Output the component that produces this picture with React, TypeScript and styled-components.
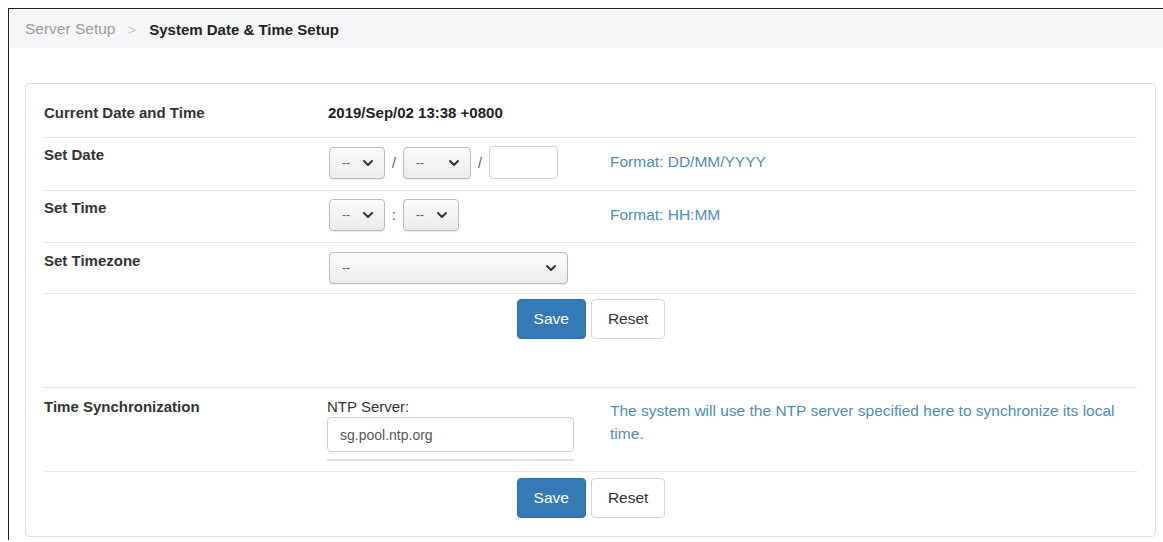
import React from "react";
import styled, { createGlobalStyle } from "styled-components";
import { ChevronDown } from "lucide-react";

const GlobalStyle = createGlobalStyle`
  html, body {
    margin: 0;
    padding: 0;
    background: #fff;
  }
  body {
    font-family: "Liberation Sans", Arial, sans-serif;
    font-size: 15px;
    color: #333;
  }
`;

const Frame = styled.div`
  margin: 8px 0 0 8px;
  padding: 1px 0 0 1px;
  border-top: 1px solid #222;
  border-left: 1px solid #222;
  min-height: 532px;
  box-sizing: border-box;
`;

const Crumbs = styled.div`
  height: 38px;
  background: #f4f6f8;
  display: flex;
  align-items: center;
  padding-left: 15px;
  gap: 12px;
  font-size: 15px;
`;

const CrumbLink = styled.span`
  color: #9a9a9a;
  font-size: 15.5px;
`;

const CrumbSep = styled.span`
  color: #c8c8c8;
`;

const CrumbCurrent = styled.span`
  color: #222;
  font-weight: bold;
  margin-left: 1px;
`;

const Panel = styled.div`
  margin: 35px 7px 0 15px;
  padding: 0 18px;
  border: 1px solid #dedede;
  border-radius: 4px;
`;

const Row = styled.div<{ $pt: number; $pb: number; $top?: boolean }>`
  display: grid;
  grid-template-columns: 284px 282px 1fr;
  align-items: start;
  padding: ${(p) => p.$pt}px 0 ${(p) => p.$pb}px;
  border-bottom: 1px solid #e4e4e4;
  border-top: ${(p) => (p.$top ? "1px solid #e4e4e4" : "none")};
`;

const Label = styled.div`
  font-weight: bold;
  line-height: 18px;
  color: #333;
`;

const Value = styled.div`
  font-weight: bold;
  line-height: 18px;
  color: #222;
`;

const Controls = styled.div`
  display: flex;
  align-items: center;
  gap: 6px;
  margin-left: 1px;
`;

const Help = styled.div<{ $top?: number }>`
  color: #4f8cb6;
  font-size: 15.5px;
  line-height: 23px;
  padding-top: ${(p) => p.$top ?? 0}px;
  max-width: 515px;
`;

const Divider = styled.span`
  color: #555;
  font-size: 14px;
  width: 6px;
  text-align: center;
`;

const SelectBox = styled.div<{ $w: number }>`
  width: ${(p) => p.$w}px;
  height: 32px;
  box-sizing: border-box;
  border: 1px solid #b9b9b9;
  border-radius: 4px;
  background: linear-gradient(#fbfbfb, #ececec);
  box-shadow: 0 1px 1px rgba(0, 0, 0, 0.08);
  display: flex;
  align-items: center;
  justify-content: space-between;
  padding: 0 8px 0 12px;
  font-size: 12px;
  color: #555;
`;

const TextBox = styled.div<{ $w: number; $h: number }>`
  width: ${(p) => p.$w}px;
  height: ${(p) => p.$h}px;
  box-sizing: border-box;
  border: 1px solid #cfcfcf;
  border-radius: 4px;
  background: #fff;
  display: flex;
  align-items: center;
  padding: 0 12px;
  font-size: 14px;
  color: #555;
`;

const NtpField = styled.div`
  display: flex;
  flex-direction: column;
  margin-left: -1px;
  width: 247px;
`;

const FieldCaption = styled.div`
  line-height: 18px;
  color: #333;
  margin-bottom: 1px;
`;

const Underline = styled.div`
  height: 2px;
  background: #e2e2e2;
  margin-top: 7px;
`;

const Actions = styled.div<{ $pt: number; $pb: number }>`
  display: flex;
  justify-content: center;
  gap: 5px;
  padding: ${(p) => p.$pt}px 0 ${(p) => p.$pb}px;
  margin-left: 1px;
`;

const Button = styled.button<{ $primary?: boolean }>`
  height: 40px;
  padding: 0 16px;
  border-radius: 4px;
  font-family: inherit;
  font-size: 15.5px;
  cursor: pointer;
  border: 1px solid ${(p) => (p.$primary ? "#2e6da4" : "#d4d4d4")};
  background: ${(p) => (p.$primary ? "#337ab7" : "#fff")};
  color: ${(p) => (p.$primary ? "#fff" : "#333")};
`;

function Select({ width }: { width: number }) {
  return (
    <SelectBox $w={width}>
      <span>--</span>
      <ChevronDown size={16} strokeWidth={3} color="#333" />
    </SelectBox>
  );
}

export default function App() {
  return (
    <>
      <GlobalStyle />
      <Frame>
        <Crumbs>
          <CrumbLink>Server Setup</CrumbLink>
          <CrumbSep>&gt;</CrumbSep>
          <CrumbCurrent>System Date &amp; Time Setup</CrumbCurrent>
        </Crumbs>

        <Panel>
          <Row $pt={20} $pb={15}>
            <Label>Current Date and Time</Label>
            <Value>2019/Sep/02 13:38 +0800</Value>
          </Row>

          <Row $pt={8} $pb={11}>
            <Label>Set Date</Label>
            <Controls>
              <Select width={56} />
              <Divider>/</Divider>
              <Select width={68} />
              <Divider>/</Divider>
              <TextBox $w={69} $h={33} />
            </Controls>
            <Help $top={4}>Format: DD/MM/YYYY</Help>
          </Row>

          <Row $pt={8} $pb={11}>
            <Label>Set Time</Label>
            <Controls>
              <Select width={56} />
              <Divider>:</Divider>
              <Select width={56} />
            </Controls>
            <Help $top={4}>Format: HH:MM</Help>
          </Row>

          <Row $pt={9} $pb={9}>
            <Label>Set Timezone</Label>
            <Controls>
              <Select width={239} />
            </Controls>
          </Row>

          <Actions $pt={5} $pb={48}>
            <Button $primary>Save</Button>
            <Button>Reset</Button>
          </Actions>

          <Row $pt={10} $pb={10} $top>
            <Label>Time Synchronization</Label>
            <NtpField>
              <FieldCaption>NTP Server:</FieldCaption>
              <TextBox $w={247} $h={35}>sg.pool.ntp.org</TextBox>
              <Underline />
            </NtpField>
            <Help $top={1}>
              The system will use the NTP server specified here to synchronize its local time.
            </Help>
          </Row>

          <Actions $pt={6} $pb={18}>
            <Button $primary>Save</Button>
            <Button>Reset</Button>
          </Actions>
        </Panel>
      </Frame>
    </>
  );
}
